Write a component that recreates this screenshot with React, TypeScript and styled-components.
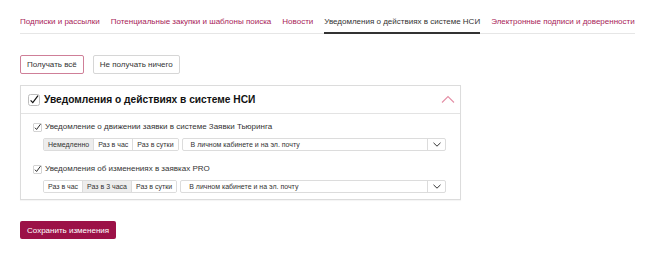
import React, { useState } from "react";
import styled, { createGlobalStyle } from "styled-components";

const Global = createGlobalStyle`
  html, body { margin: 0; padding: 0; background: #fff; }
  body { font-family: "Liberation Sans", Arial, sans-serif; color: #333; }
`;

const Page = styled.div`
  padding: 15px 20px 0 20px;
  display: flex;
  flex-direction: column;
  align-items: flex-start;
`;

const Tabs = styled.nav`
  display: inline-flex;
  gap: 11px;
  border-bottom: 1px solid #e6e6e6;
`;

const Tab = styled.div<{ $active?: boolean }>`
  font-size: 8px;
  line-height: 12px;
  padding: 1px 0 4px;
  white-space: nowrap;
  color: ${(p) => (p.$active ? "#333" : "#a81d58")};
  border-bottom: 2px solid ${(p) => (p.$active ? "#333" : "transparent")};
  margin-bottom: -1px;
`;

const Actions = styled.div`
  display: flex;
  gap: 9px;
  margin-top: 21px;
`;

const ActionButton = styled.button<{ $primary?: boolean }>`
  font-family: "Liberation Sans", Arial, sans-serif;
  font-size: 8px;
  color: #333;
  background: #fff;
  height: 19px;
  padding: 0 6px;
  border-radius: 2px;
  border: 1px solid ${(p) => (p.$primary ? "#cf7f98" : "#d6d6d6")};
`;

const Panel = styled.section`
  margin-top: 11px;
  width: 439px;
  border: 1px solid #dcdcdc;
  box-shadow: 0 1px 1px rgba(0, 0, 0, 0.04);
`;

const PanelHeader = styled.div`
  display: flex;
  align-items: center;
  gap: 4px;
  height: 27px;
  padding: 0 5px 0 7px;
  border-bottom: 1px solid #e3e3e3;
`;

const PanelTitle = styled.div`
  font-size: 10.2px;
  font-weight: bold;
  color: #111;
  flex: 1;
`;

const PanelBody = styled.div`
  padding: 7px 14px 6px 12px;
  display: flex;
  flex-direction: column;
  gap: 12px;
`;

const Item = styled.div`
  display: flex;
  flex-direction: column;
  gap: 5px;
`;

const ItemLabel = styled.label`
  display: flex;
  align-items: center;
  gap: 3px;
  font-size: 8px;
  line-height: 12px;
  color: #333;
`;

const Controls = styled.div`
  display: flex;
  gap: 3px;
  padding-left: 10px;
`;

const Segmented = styled.div`
  display: flex;
  border: 1px solid #dcdcdc;
  border-radius: 2px;
  overflow: hidden;
`;

const Segment = styled.div<{ $selected?: boolean }>`
  font-size: 7px;
  line-height: 11px;
  padding: 0 4px;
  color: #333;
  white-space: nowrap;
  background: ${(p) => (p.$selected ? "#ededed" : "#fff")};
  & + & { border-left: 1px solid #dcdcdc; }
`;

const Select = styled.div`
  display: flex;
  flex: 1;
  border: 1px solid #dcdcdc;
  border-radius: 2px;
  height: 11px;
`;

const SelectValue = styled.div`
  flex: 1;
  font-size: 7px;
  line-height: 11px;
  padding-left: 8px;
  color: #333;
`;

const SelectArrow = styled.div`
  width: 17px;
  border-left: 1px solid #dcdcdc;
  display: flex;
  align-items: center;
  justify-content: center;
`;

const SaveButton = styled.button`
  margin-top: 21px;
  height: 18px;
  padding: 0 7px;
  background: #9c1147;
  color: #fff;
  border: none;
  border-radius: 2px;
  font-family: "Liberation Sans", Arial, sans-serif;
  font-size: 8px;
`;

const CheckBox: React.FC<{ size: number }> = ({ size }) => (
  <svg width={size} height={size} viewBox="0 0 12 12">
    <rect x="0.5" y="0.5" width="11" height="11" rx="2" fill="#fff" stroke="#bdbdbd" />
    <path d="M2.6 6.3 L4.8 8.6 L10 1.6" fill="none" stroke="#111" strokeWidth="1.2" />
  </svg>
);

const rows = [
  {
    label: "Уведомление о движении заявки в системе Заявки Тьюринга",
    options: ["Немедленно", "Раз в час", "Раз в сутки"],
    selected: 0,
  },
  {
    label: "Уведомления об изменениях в заявках PRO",
    options: ["Раз в час", "Раз в 3 часа", "Раз в сутки"],
    selected: 1,
  },
];

export default function App() {
  const [tabs] = useState([
    "Подписки и рассылки",
    "Потенциальные закупки и шаблоны поиска",
    "Новости",
    "Уведомления о действиях в системе НСИ",
    "Электронные подписи и доверенности",
  ]);
  return (
    <>
      <Global />
      <Page>
        <Tabs>
          {tabs.map((t, i) => (
            <Tab key={t} $active={i === 3}>
              {t}
            </Tab>
          ))}
        </Tabs>
        <Actions>
          <ActionButton $primary>Получать всё</ActionButton>
          <ActionButton>Не получать ничего</ActionButton>
        </Actions>
        <Panel>
          <PanelHeader>
            <CheckBox size={12} />
            <PanelTitle>Уведомления о действиях в системе НСИ</PanelTitle>
            <svg width="14" height="9" viewBox="0 0 14 9">
              <path d="M1 7.5 L7 1.5 L13 7.5" fill="none" stroke="#e48fa6" strokeWidth="1.1" />
            </svg>
          </PanelHeader>
          <PanelBody>
            {rows.map((r) => (
              <Item key={r.label}>
                <ItemLabel>
                  <CheckBox size={9} />
                  {r.label}
                </ItemLabel>
                <Controls>
                  <Segmented>
                    {r.options.map((o, i) => (
                      <Segment key={o} $selected={i === r.selected}>
                        {o}
                      </Segment>
                    ))}
                  </Segmented>
                  <Select>
                    <SelectValue>В личном кабинете и на эл. почту</SelectValue>
                    <SelectArrow>
                      <svg width="8" height="5" viewBox="0 0 8 5">
                        <path d="M0.5 0.8 L4 4.2 L7.5 0.8" fill="none" stroke="#333" strokeWidth="1" />
                      </svg>
                    </SelectArrow>
                  </Select>
                </Controls>
              </Item>
            ))}
          </PanelBody>
        </Panel>
        <SaveButton>Сохранить изменения</SaveButton>
      </Page>
    </>
  );
}
